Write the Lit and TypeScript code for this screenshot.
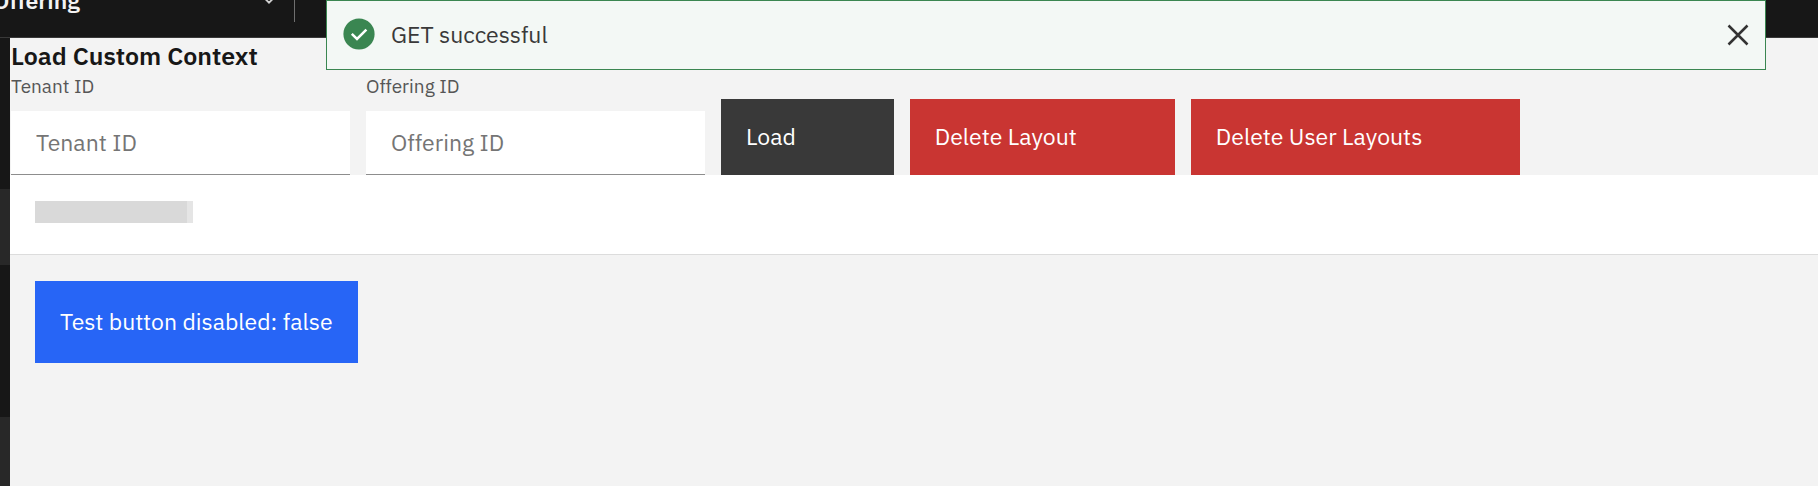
import { LitElement, html, css } from "lit";
import { customElement, state } from "lit/decorators.js";

@customElement("app-root")
export class AppRoot extends LitElement {
  static styles = css`
    :host {
      display: flex;
      flex-direction: column;
      position: relative;
      min-height: 100vh;
      overflow: hidden;
      box-sizing: border-box;
      background: #f3f3f3;
      color: #171717;
      font-family: "IBM Plex Sans", "Open Sans", "Noto Sans", sans-serif;
      font-size: 23px;
      line-height: 28px;
    }
    *,
    *::before {
      box-sizing: border-box;
    }
    button,
    input {
      font: inherit;
      border: 0;
      border-radius: 0;
      margin: 0;
    }
    .header {
      display: flex;
      align-items: flex-end;
      height: 38px;
      background: #171717;
      border-bottom: 1px solid #393939;
    }
    .switcher {
      display: flex;
      align-items: center;
      justify-content: space-between;
      width: 283px;
      height: 60px;
      margin-left: -7px;
      padding: 0 0 14px;
      background: none;
      color: #f3f3f3;
      font-weight: 600;
    }
    .chevron {
      width: 14px;
      height: 8px;
    }
    .divider {
      width: 1px;
      height: 48px;
      margin: 0 0 15px 18px;
      background: #6f6f6f;
    }
    .body {
      display: flex;
      flex: 1;
    }
    .rail {
      flex: none;
      width: 10px;
      padding-top: 151px;
      background: #171717;
      display: flex;
      flex-direction: column;
      gap: 152px;
    }
    .rail-item {
      display: block;
      height: 76px;
      background: #282828;
    }
    .main {
      flex: 1;
      min-width: 0;
    }
    .context {
      padding-left: 1px;
    }
    .title {
      margin: 0;
      padding-top: 2px;
      font-size: 25px;
      line-height: 32px;
      font-weight: 600;
    }
    .fields {
      display: flex;
      align-items: flex-end;
      gap: 16px;
    }
    .field {
      display: flex;
      flex-direction: column;
      flex: 0 1 339px;
      min-width: 0;
      gap: 11px;
    }
    .label {
      font-size: 19px;
      line-height: 28px;
      color: #565656;
    }
    .input {
      width: 100%;
      height: 64px;
      padding: 0 25px 1px;
      background: #fff;
      border-bottom: 1px solid #8d8d8d;
      color: #171717;
      outline: none;
    }
    .input::placeholder {
      color: #757575;
      opacity: 1;
    }
    .btn {
      height: 76px;
      padding: 0 98px 2px 25px;
      color: #fff;
      text-align: left;
      white-space: nowrap;
      cursor: pointer;
    }
    .dark {
      background: #393939;
    }
    .danger {
      background: #c93532;
    }
    .primary {
      height: 82px;
      padding: 0 25px 2px;
      background: #2765f6;
    }
    .band {
      padding: 26px 25px 31px;
      background: #fff;
      border-bottom: 1px solid #dcdcdc;
    }
    .skeleton {
      width: 158px;
      height: 22px;
      background: #e5e5e5;
    }
    .skeleton::before {
      content: "";
      display: block;
      width: 152px;
      height: 100%;
      background: #d9d9d9;
    }
    .content {
      padding: 26px 25px;
    }
    .toast {
      position: absolute;
      top: 0;
      left: 326px;
      right: 52px;
      display: flex;
      align-items: center;
      gap: 16px;
      height: 70px;
      padding: 0 16px;
      background: #f3f8f5;
      border: 1px solid #3a8651;
      color: #393939;
    }
    .check {
      flex: none;
      width: 32px;
      height: 32px;
      margin-bottom: 2px;
    }
    .message {
      flex: 1;
      padding-bottom: 2px;
    }
    .close {
      display: flex;
      padding: 0;
      background: none;
      cursor: pointer;
    }
    .close svg {
      width: 22px;
      height: 22px;
    }
  `;

  @state() private toastOpen = true;

  private closeToast() {
    this.toastOpen = false;
  }

  private renderToast() {
    return html`
      <div class="toast" role="status">
        <svg class="check" viewBox="0 0 32 32" aria-hidden="true">
          <circle cx="16" cy="16" r="15.6" fill="#3a8651" />
          <path d="M8.8 15.8l5.2 5.2 9.4-9.4" fill="none" stroke="#fff" stroke-width="2.5" />
        </svg>
        <span class="message">GET successful</span>
        <button class="close" aria-label="Close" @click=${this.closeToast}>
          <svg viewBox="0 0 22 22" aria-hidden="true">
            <path d="M1.5 1.5l19 19M20.5 1.5l-19 19" stroke="#333" stroke-width="2.5" />
          </svg>
        </button>
      </div>
    `;
  }

  render() {
    return html`
      <header class="header">
        <button class="switcher">
          <span>Offering</span>
          <svg class="chevron" viewBox="0 0 14 8" aria-hidden="true">
            <path d="M1.5 1.2L7 6.7l5.5-5.5" fill="none" stroke="#d0d0d0" stroke-width="1.8" />
          </svg>
        </button>
        <span class="divider"></span>
      </header>
      <div class="body">
        <nav class="rail" aria-label="Side navigation">
          <span class="rail-item"></span>
          <span class="rail-item"></span>
        </nav>
        <main class="main">
          <section class="context">
            <h1 class="title">Load Custom Context</h1>
            <div class="fields">
              <div class="field">
                <label class="label" for="tenant">Tenant ID</label>
                <input class="input" id="tenant" type="text" placeholder="Tenant ID" />
              </div>
              <div class="field">
                <label class="label" for="offering">Offering ID</label>
                <input class="input" id="offering" type="text" placeholder="Offering ID" />
              </div>
              <button class="btn dark">Load</button>
              <button class="btn danger">Delete Layout</button>
              <button class="btn danger">Delete User Layouts</button>
            </div>
          </section>
          <div class="band"><div class="skeleton"></div></div>
          <section class="content">
            <button class="btn primary">Test button disabled: false</button>
          </section>
        </main>
      </div>
      ${this.toastOpen ? this.renderToast() : null}
    `;
  }
}
